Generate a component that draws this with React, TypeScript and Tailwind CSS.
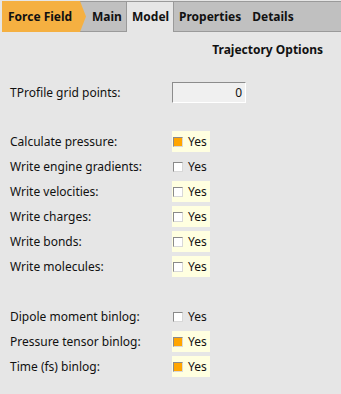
import React from 'react';

type Row = { label: string; checked: boolean; highlight: boolean };

const groupA: Row[] = [
  { label: 'Calculate pressure:', checked: true, highlight: true },
  { label: 'Write engine gradients:', checked: false, highlight: false },
  { label: 'Write velocities:', checked: false, highlight: true },
  { label: 'Write charges:', checked: false, highlight: true },
  { label: 'Write bonds:', checked: false, highlight: true },
  { label: 'Write molecules:', checked: false, highlight: true },
];

const groupB: Row[] = [
  { label: 'Dipole moment binlog:', checked: false, highlight: false },
  { label: 'Pressure tensor binlog:', checked: true, highlight: true },
  { label: 'Time (fs) binlog:', checked: true, highlight: true },
];

// Qt-style checkbox with "Yes" caption
const YesBox: React.FC<{ checked: boolean; highlight: boolean }> = ({ checked, highlight }) => (
  <div
    className={`flex items-center h-[21px] w-[38px] pl-[1px] ${highlight ? 'bg-[#ffffe0]' : ''}`}
  >
    <span
      className={`w-[10px] h-[10px] border-t border-l border-[#8a8a8a] border-r border-b border-r-[#d8d8d8] border-b-[#d8d8d8] ${
        checked ? 'bg-[#ffa500]' : 'bg-white'
      }`}
    />
    <span className="ml-[5px] text-[12px] text-[#111]">Yes</span>
  </div>
);

const OptionRow: React.FC<{ row: Row }> = ({ row }) => (
  <div className="flex items-center h-[25px]">
    <span className="w-[172px] pl-[10px] text-[12px] text-[#111]">{row.label}</span>
    <YesBox checked={row.checked} highlight={row.highlight} />
  </div>
);

const App: React.FC = () => {
  return (
    <div className="w-[341px] h-[394px] bg-[#e6e6e6] overflow-hidden font-['Noto_Sans',sans-serif]">
      {/* Tab strip */}
      <div className="pt-[1px] pl-[2px]">
        <div className="flex h-[31px] bg-[#c0c0c0] border-t border-b border-[#9a9a9a] text-[12px] font-bold text-[#111]">
          <div className="flex items-center w-[84px] -mt-[1px] -mb-[1px] h-[31px] pl-[6px] bg-[#f5b041] [clip-path:polygon(0_0,78px_0,84px_50%,78px_100%,0_100%)]">
            Force Field
          </div>
          <div className="flex items-center w-[40px] pl-[6px]">Main</div>
          <div className="flex items-center w-[48px] pl-[5px] bg-[#e6e6e6] border-l border-r border-[#9a9a9a] -mb-[1px]">
            Model
          </div>
          <div className="flex items-center pl-[5px]">Properties</div>
          <div className="flex items-center pl-[11px]">Details</div>
        </div>
      </div>

      {/* Section title */}
      <div className="flex justify-end items-center h-[24px] mt-[6px] pr-[18px] text-[12px] font-bold text-[#111]">
        Trajectory Options
      </div>

      {/* Numeric field */}
      <div className="flex items-center h-[25px] mt-[18px]">
        <span className="w-[172px] pl-[10px] text-[12px] text-[#111]">TProfile grid points:</span>
        <div className="flex items-center justify-end w-[74px] h-[21px] pr-[3px] bg-[#f0f0f0] border-t border-l border-[#8c8c8c] border-r border-b border-r-white border-b-white text-[12px] text-[#111]">
          0
        </div>
      </div>

      <div className="mt-[24px]">
        {groupA.map((r) => (
          <OptionRow key={r.label} row={r} />
        ))}
      </div>

      <div className="mt-[25px]">
        {groupB.map((r) => (
          <OptionRow key={r.label} row={r} />
        ))}
      </div>
    </div>
  );
};

export default App;
